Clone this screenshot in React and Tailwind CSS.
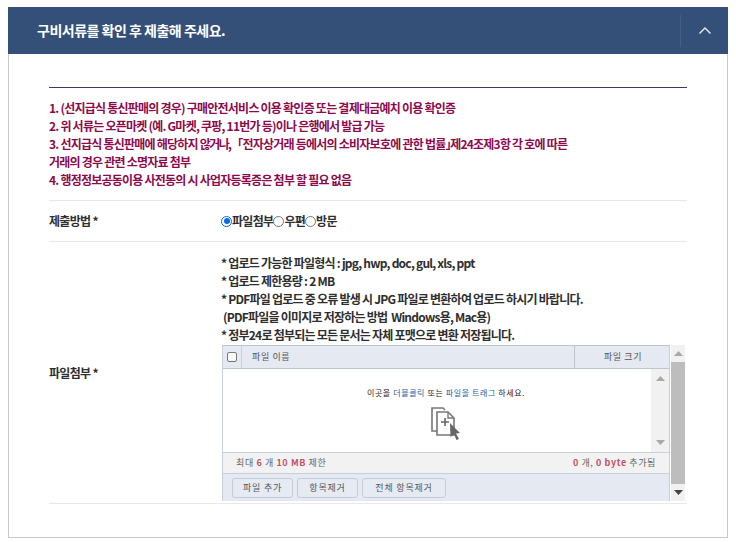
const font = { fontFamily: '"Noto Sans CJK KR", "Noto Sans", sans-serif' };

function Radio({ on }) {
  return (
    <span className={`inline-block w-[11px] h-[11px] rounded-full shrink-0 border bg-white ${on ? "border-[#0a6be0] p-[1.5px]" : "border-[#777]"}`}>
      {on && <span className="block w-full h-full rounded-full bg-[#0a6be0]" />}
    </span>
  );
}

function Tri({ down, color = "#a8a8a8" }) {
  return (
    <svg width="9" height="5" viewBox="0 0 9 5">
      <path d={down ? "M0 0H9L4.5 5Z" : "M4.5 0L9 5H0Z"} fill={color} />
    </svg>
  );
}

function Btn({ children, w }) {
  return (
    <div className={`${w} h-[20px] flex items-center justify-center rounded-[3px] border border-[#c3cdd9] bg-[#e6ebf3] text-[9px] tracking-[0.8px] text-[#555]`}>
      {children}
    </div>
  );
}

export default function App() {
  return (
    <div className="w-[736px] h-[542px] bg-white pt-[7px] px-[8px] overflow-hidden" style={font}>
      <div className="w-[720px] h-[531px] border-x border-b border-[#c9c9c9]">
        <div className="-mx-px h-[47px] bg-[#344f78] flex items-center justify-between">
          <div className="pl-[29px] text-[14px] font-bold text-white tracking-[-0.5px]">구비서류를 확인 후 제출해 주세요.</div>
          <div className="h-[32px] w-[48px] border-l border-[#465f86] flex items-center justify-center">
            <svg width="14" height="9" viewBox="0 0 14 9" fill="none" stroke="#e8edf4" strokeWidth="1.4">
              <path d="M1.5 7.5L7 2L12.5 7.5" />
            </svg>
          </div>
        </div>
        <div className="px-[40px] pt-[33px]">
          <div className="w-[638px] border-t border-[#3a3a6e]" />
          <div className="pt-[11px] pb-[11px] text-[12px] leading-[18px] font-bold tracking-[-0.77px] text-[#8c0a4c] whitespace-nowrap border-b border-[#e8e8e8]">
            <div>1. (선지급식 통신판매의 경우) 구매안전서비스 이용 확인증 또는 결제대금예치 이용 확인증</div>
            <div>2. 위 서류는 오픈마켓 (예. G마켓, 쿠팡, 11번가 등)이나 은행에서 발급 가능</div>
            <div>3. 선지급식 통신판매에 해당하지 <span className="tracking-[-1.6px]">않거나</span>,「전자상거래 등에서의 소비자보호에 관한 법률<span className="tracking-[-5px]">」 </span>제24조제3항 각 호에 따른</div>
            <div>거래의 경우 관련 소명자료 첨부</div>
            <div>4. 행정정보공동이용 사전동의 시 사업자등록증은 첨부 할 필요 없음</div>
          </div>
          <div className="h-[41px] flex items-center border-b border-[#e8e8e8] text-[12px] font-bold tracking-[-0.7px] text-[#2e2e2e]">
            <div className="w-[172px]">제출방법 *</div>
            <div className="flex items-center">
              <Radio on />
              <span>파일첨부</span>
              <Radio />
              <span>우편</span>
              <Radio />
              <span>방문</span>
            </div>
          </div>
          <div className="h-[262px] flex border-b border-[#e8e8e8]">
            <div className="w-[172px] pt-[122px] text-[12px] font-bold tracking-[-0.7px] text-[#2e2e2e]">파일첨부 *</div>
            <div className="pt-[12px]">
              <div className="text-[12px] leading-[18px] font-bold tracking-[-0.77px] text-[#2e2e2e] whitespace-nowrap">
                <div>* 업로드 가능한 파일형식 : jpg, hwp, doc, gul, xls, ppt</div>
                <div>* 업로드 제한용량 : 2 MB</div>
                <div>* PDF파일 업로드 중 오류 발생 시 JPG 파일로 변환하여 업로드 하시기 바랍니다.</div>
                <div>&nbsp;(PDF파일을 이미지로 저장하는 방법 &nbsp;Windows용, Mac용)</div>
                <div>* 정부24로 첨부되는 모든 문서는 자체 포맷으로 변환 저장됩니다.</div>
              </div>
              <div className="mt-[1px] flex ml-px">
                <div className="w-[448px] h-[156px] border-x border-[#c9d0da] flex flex-col">
                  <div className="h-[24px] flex items-center border-y border-[#bcc5d2] bg-[#e4e9f2] text-[9px] tracking-[0.6px] text-[#555]">
                    <div className="w-[19px] h-full flex items-center justify-center border-r border-[#c9d0da]">
                      <span className="w-[10px] h-[10px] rounded-[2px] border border-[#777] bg-white" />
                    </div>
                    <div className="flex-1 pl-[10px]">파일 이름</div>
                    <div className="w-[95px] pl-[2px] h-full flex items-center justify-center border-l border-[#bcc5d2]">파일 크기</div>
                  </div>
                  <div className="h-[84px] flex border-b border-[#c9cfd8]">
                    <div className="flex-1 flex flex-col items-center pt-[18px] pl-[18px]">
                      <div className="text-[8px] leading-[12px] tracking-[0.6px] text-[#222]">
                        이곳을 <span className="text-[#1a5fa8]">더블클릭</span> 또는 <span className="text-[#1a5fa8]">파일을 트래그</span> 하세요.
                      </div>
                      <svg className="mt-[7px]" width="32" height="34" viewBox="0 0 32 34" fill="none">
                        <path d="M8 25H2V2H13L15 4" stroke="#777" strokeWidth="1.6" />
                        <path d="M7 6H18L24 12V29H7Z" fill="#fff" stroke="#777" strokeWidth="1.6" />
                        <path d="M18 6V12H24" stroke="#777" strokeWidth="1.4" />
                        <path d="M11 16H19M15 12V20" stroke="#666" strokeWidth="1.6" />
                        <path d="M20 17L30 27L26 27.5L29 33L26.5 34L24 28.5L20.5 31Z" fill="#666" />
                      </svg>
                    </div>
                    <div className="w-[18px] bg-[#f1f1f1] flex flex-col items-center justify-between py-[7px]">
                      <Tri />
                      <Tri down />
                    </div>
                  </div>
                  <div className="h-[21px] flex items-center justify-between px-[13px] bg-[#f2f2f2] border-b border-[#c9cfd8] text-[9px] tracking-[0.6px] text-[#666]">
                    <div>최대 <span className="font-bold text-[#c2506a]">6</span> 개 <span className="font-bold text-[#c2506a]">10 MB</span> 제한</div>
                    <div><span className="font-bold text-[#c2506a]">0</span> 개, <span className="font-bold text-[#c2506a]">0 byte</span> 추가됨</div>
                  </div>
                  <div className="flex-1 flex items-start gap-[4px] pt-[4px] pl-[9px] bg-[#e4e9f2]">
                    <Btn w="w-[61px]">파일 추가</Btn>
                    <Btn w="w-[61px]">항목제거</Btn>
                    <Btn w="w-[84px]">전체 항목제거</Btn>
                  </div>
                </div>
                <div className="ml-[1px] w-[14px] h-[156px] bg-[#f1f1f1] flex flex-col items-center">
                  <div className="h-[17px] flex items-center justify-center"><Tri /></div>
                  <div className="w-full flex-1 bg-[#bdbdbd]" />
                  <div className="h-[17px] flex items-center justify-center"><Tri down color="#444" /></div>
                </div>
              </div>
            </div>
          </div>
        </div>
      </div>
    </div>
  );
}
